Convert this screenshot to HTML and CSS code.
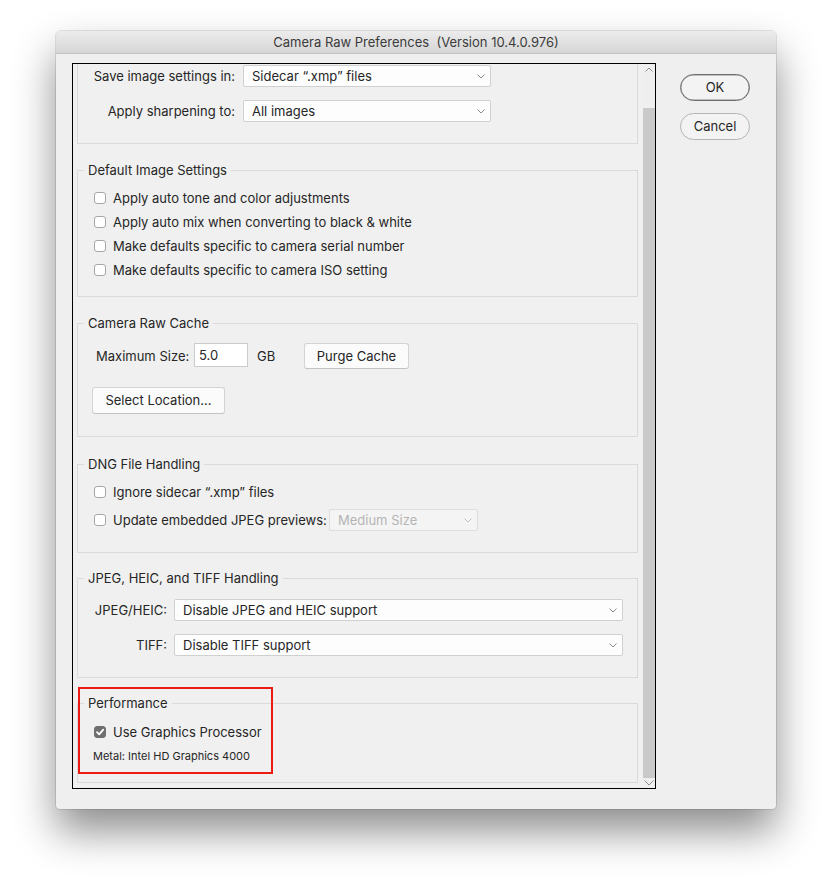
FILE: index.html
```html
<!DOCTYPE html>
<html lang="en">
<head>
<meta charset="utf-8">
<title>Camera Raw Preferences</title>
<link rel="stylesheet" href="styles.css">
</head>
<body>
<div class="window">
  <div class="titlebar">Camera Raw Preferences&nbsp; (Version 10.4.0.976)</div>
  <div class="wbody">
    <div class="panel">
      <div class="content">

        <div class="group g1">
          <div class="formgrid wide">
            <span class="flabel">Save image settings in:</span>
            <div class="select"><span>Sidecar “.xmp” files</span><svg class="chev" width="8" height="5" viewBox="0 0 8 5"><polyline points="0.5,0.5 4,4 7.5,0.5"/></svg></div>
            <span class="flabel">Apply sharpening to:</span>
            <div class="select"><span>All images</span><svg class="chev" width="8" height="5" viewBox="0 0 8 5"><polyline points="0.5,0.5 4,4 7.5,0.5"/></svg></div>
          </div>
        </div>

        <div class="group g2">
          <div class="gtitle">Default Image Settings</div>
          <div class="checks">
            <div class="crow"><span class="cb"></span>Apply auto tone and color adjustments</div>
            <div class="crow"><span class="cb"></span>Apply auto mix when converting to black &amp; white</div>
            <div class="crow"><span class="cb"></span>Make defaults specific to camera serial number</div>
            <div class="crow"><span class="cb"></span>Make defaults specific to camera ISO setting</div>
          </div>
        </div>

        <div class="group g3">
          <div class="gtitle">Camera Raw Cache</div>
          <div class="cacherow">
            <span class="mlabel">Maximum Size:</span>
            <div class="input">5.0</div>
            <span class="unit">GB</span>
            <div class="btn purge">Purge Cache</div>
          </div>
          <div class="btn selloc">Select Location...</div>
        </div>

        <div class="group g4">
          <div class="gtitle">DNG File Handling</div>
          <div class="dngrows">
            <div class="crow"><span class="cb"></span>Ignore sidecar “.xmp” files</div>
            <div class="crow"><span class="cb"></span><span class="dnglabel">Update embedded JPEG previews:</span><div class="select disabled medium"><span>Medium Size</span><svg class="chev" width="8" height="5" viewBox="0 0 8 5"><polyline points="0.5,0.5 4,4 7.5,0.5"/></svg></div></div>
          </div>
        </div>

        <div class="group g5">
          <div class="gtitle">JPEG, HEIC, and TIFF Handling</div>
          <div class="formgrid narrow">
            <span class="flabel">JPEG/HEIC:</span>
            <div class="select"><span>Disable JPEG and HEIC support</span><svg class="chev" width="8" height="5" viewBox="0 0 8 5"><polyline points="0.5,0.5 4,4 7.5,0.5"/></svg></div>
            <span class="flabel">TIFF:</span>
            <div class="select"><span>Disable TIFF support</span><svg class="chev" width="8" height="5" viewBox="0 0 8 5"><polyline points="0.5,0.5 4,4 7.5,0.5"/></svg></div>
          </div>
        </div>

        <div class="group g6">
          <div class="gtitle">Performance</div>
          <div class="crow perfrow"><span class="cb checked"><svg width="10" height="10" viewBox="0 0 10 10"><polyline points="2,5.2 4.2,7.4 8.2,2.6"/></svg></span>Use Graphics Processor</div>
          <div class="metal">Metal: Intel HD Graphics 4000</div>
          <div class="highlight"></div>
        </div>

      </div>
      <div class="scrollbar">
        <div class="sb-up"><svg width="8" height="5" viewBox="0 0 8 5"><polyline points="0.5,4.5 4,1 7.5,4.5"/></svg></div>
        <div class="sb-track"></div>
        <div class="sb-thumb"></div>
        <div class="sb-down"><svg width="10" height="6" viewBox="0 0 10 6"><polyline points="0.5,0.5 5,5 9.5,0.5"/></svg></div>
      </div>
    </div>
    <div class="buttons">
      <div class="pill ok">OK</div>
      <div class="pill cancel">Cancel</div>
    </div>
  </div>
</div>
</body>
</html>
```

FILE: styles.css
```css
html, body {
  margin: 0;
  padding: 0;
}
body {
  background: #ffffff;
  font-family: Inter, "Liberation Sans", Arial, sans-serif;
  font-size: 13px;
  color: #262626;
  padding-top: 31px;
  padding-left: 56px;
  height: 889px;
  box-sizing: border-box;
  overflow: hidden;
}

.window {
  width: 720px;
  height: 778px;
  box-sizing: border-box;
  background: #efefef;
  border-radius: 5px 5px 4px 4px;
  box-shadow: 0 0 0 1px rgba(0, 0, 0, 0.10), 0 22px 42px rgba(0, 0, 0, 0.45);
}

.titlebar {
  height: 22px;
  border-bottom: 1px solid #c2c2c2;
  background: linear-gradient(#ececec, #d6d6d6);
  border-radius: 5px 5px 0 0;
  text-align: center;
  line-height: 22px;
  color: #3b3b3b;
  font-size: 13px;
}

.wbody {
  display: flex;
  padding: 9px 0 0 16px;
}

.panel {
  width: 584px;
  height: 726px;
  box-sizing: border-box;
  border: 1px solid #000000;
  display: flex;
  background: #f0f0f0;
}

.content {
  width: 570px;
  padding-left: 4px;
  box-sizing: border-box;
  overflow: hidden;
}

.group {
  width: 561px;
  box-sizing: border-box;
  border: 1px solid #dadada;
}

.gtitle {
  width: fit-content;
  margin: -9px 0 0 6px;
  padding: 0 4px;
  line-height: 16px;
  background: #f0f0f0;
  color: #262626;
}

/* group 1 (scrolled, top clipped) */
.g1 {
  border-top: none;
  padding: 1px 0 21px 0;
}

.formgrid {
  display: grid;
  row-gap: 13px;
  align-items: center;
}
.formgrid.wide {
  grid-template-columns: 157px 248px;
  column-gap: 8px;
}
.formgrid.narrow {
  grid-template-columns: 89px 449px;
  column-gap: 7px;
}
.flabel {
  text-align: right;
  white-space: nowrap;
}

.select {
  height: 22px;
  box-sizing: border-box;
  background: #fdfdfd;
  border: 1px solid #d0d0d0;
  border-radius: 2px;
  display: flex;
  align-items: center;
  justify-content: space-between;
  padding: 0 5px 0 8px;
  white-space: nowrap;
}
.chev polyline {
  fill: none;
  stroke: #8a8a8a;
  stroke-width: 1;
}
.select.disabled {
  background: #f4f4f4;
  border-color: #dedede;
  color: #b4b4b4;
}
.select.disabled .chev polyline {
  stroke: #c2c2c2;
}
.dnglabel {
  width: 216px;
  flex: none;
}
.select.medium {
  width: 149px;
  height: 22px;
}

/* group 2 */
.g2 {
  margin-top: 26px;
  padding: 0 0 14px 16px;
}
.g2 .gtitle {
  margin-left: -10px;
}
.checks {
  margin-top: 8px;
}
.crow {
  height: 24px;
  display: flex;
  align-items: center;
  white-space: nowrap;
}
.cb {
  width: 12px;
  height: 12px;
  box-sizing: border-box;
  border: 1px solid #a6a6a6;
  border-radius: 3px;
  background: #ffffff;
  margin-right: 7px;
  flex: none;
  display: flex;
  align-items: center;
  justify-content: center;
}
.cb.checked {
  background: #6f6f6f;
  border-color: #6f6f6f;
}
.cb.checked polyline {
  fill: none;
  stroke: #ffffff;
  stroke-width: 1.8;
  stroke-linecap: round;
  stroke-linejoin: round;
}

/* group 3 */
.g3 {
  margin-top: 26px;
  padding: 0 0 22px 0;
}
.cacherow {
  margin-top: 12px;
  height: 26px;
  display: flex;
  align-items: center;
  padding-left: 18px;
}
.mlabel {
  width: 98px;
  flex: none;
  white-space: nowrap;
}
.input {
  width: 54px;
  height: 24px;
  box-sizing: border-box;
  background: #ffffff;
  border: 1px solid #cbcbcb;
  padding: 0 4px;
  line-height: 22px;
  margin-top: -2px;
}
.unit {
  width: 47px;
  padding-left: 9px;
  flex: none;
}
.btn {
  box-sizing: border-box;
  background: #fbfbfb;
  border: 1px solid #d3d3d3;
  border-bottom-color: #c3c3c3;
  border-radius: 3px;
  text-align: center;
  white-space: nowrap;
}
.purge {
  width: 105px;
  height: 26px;
  line-height: 24px;
}
.selloc {
  width: 133px;
  height: 27px;
  line-height: 25px;
  margin: 18px 0 0 14px;
}

/* group 4 */
.g4 {
  margin-top: 27px;
  padding: 0 0 20px 16px;
}
.g4 .gtitle {
  margin-left: -10px;
}
.dngrows {
  margin-top: 8px;
  display: flex;
  flex-direction: column;
  row-gap: 4px;
}

/* group 5 */
.g5 {
  margin-top: 25px;
  padding: 0 0 21px 0;
}
.g5 .formgrid {
  margin-top: 13px;
}

/* group 6 */
.g6 {
  position: relative;
  margin-top: 25px;
  padding: 0 0 19px 16px;
}
.g6 .gtitle {
  margin-left: -10px;
}
.perfrow {
  margin-top: 9px;
}
.metal {
  margin: 5px 0 0 -1px;
  font-size: 11px;
  line-height: 14px;
}
.highlight {
  position: absolute;
  left: 0;
  top: -17px;
  width: 195px;
  height: 87px;
  box-sizing: border-box;
  border: 2px solid #ec1a10;
}

/* scrollbar */
.scrollbar {
  width: 12px;
  display: flex;
  flex-direction: column;
  background: #efefef;
}
.scrollbar polyline {
  fill: none;
  stroke: #8c8c8c;
  stroke-width: 1;
}
.sb-up {
  height: 10px;
  display: flex;
  justify-content: center;
  align-items: center;
}
.sb-track {
  height: 34px;
}
.sb-thumb {
  flex: 1;
  background: #c9c9c9;
}
.sb-down {
  height: 10px;
  display: flex;
  justify-content: center;
  align-items: center;
}

/* dialog buttons */
.buttons {
  margin: 11px 0 0 24px;
  display: flex;
  flex-direction: column;
  row-gap: 12px;
}
.pill {
  width: 70px;
  height: 27px;
  box-sizing: border-box;
  border-radius: 14px;
  background: #f3f3f3;
  text-align: center;
  line-height: 25px;
  font-size: 13px;
  color: #262626;
}
.pill.ok {
  border: 1px solid #6c6c6c;
  box-shadow: inset 0 0 0 0.5px #8a8a8a;
}
.pill.cancel {
  border: 1px solid #b4b4b4;
}
```
